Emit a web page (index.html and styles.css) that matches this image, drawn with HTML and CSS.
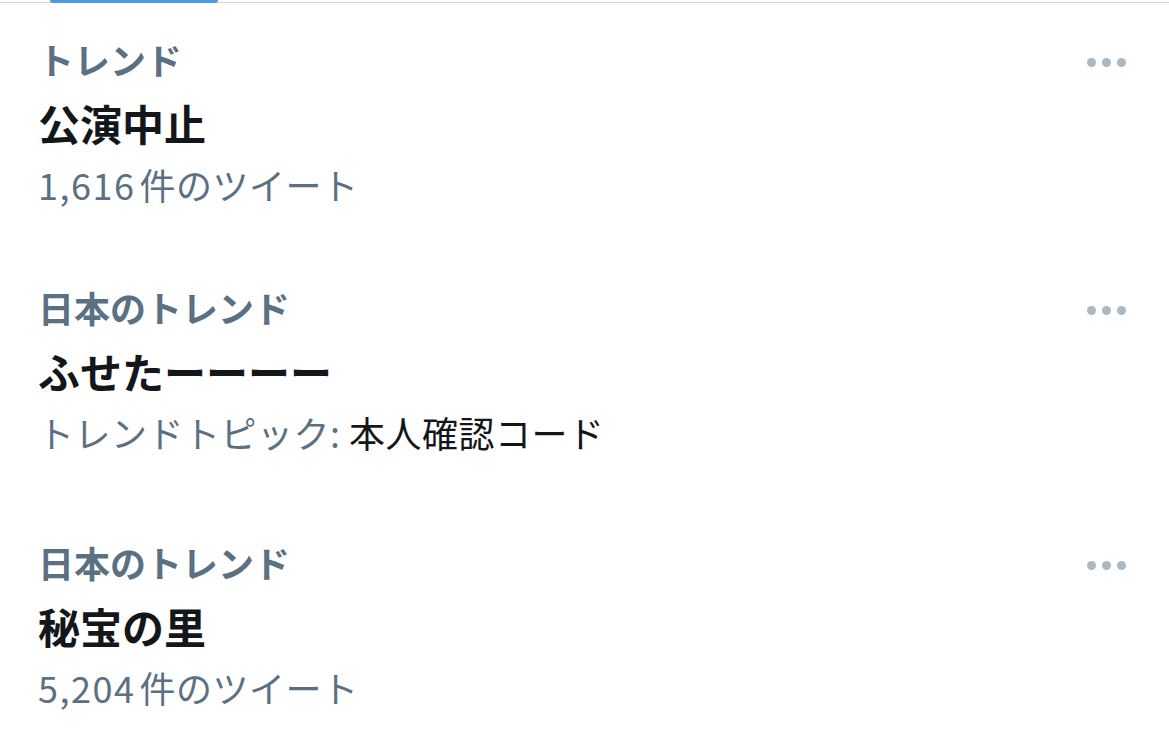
FILE: index.html
```html
<!DOCTYPE html>
<html lang="ja">
<head>
  <meta charset="UTF-8">
  <title>トレンド</title>
  <link rel="stylesheet" href="styles.css">
</head>
<body>

<div class="tabs">
  <div class="tab-indicator"></div>
</div>

<section class="trends">
  <div class="trend">
    <div class="trend-body">
      <p class="trend-label">トレンド</p>
      <p class="trend-title">公演中止</p>
      <p class="trend-meta"><span class="count">1,616</span>件のツイート</p>
    </div>
    <div class="more"><span></span><span></span><span></span></div>
  </div>

  <div class="trend">
    <div class="trend-body">
      <p class="trend-label">日本のトレンド</p>
      <p class="trend-title">ふせたーーーー</p>
      <p class="trend-meta topic-line">トレンドトピック: <span class="topic">本人確認コード</span></p>
    </div>
    <div class="more"><span></span><span></span><span></span></div>
  </div>

  <div class="trend">
    <div class="trend-body">
      <p class="trend-label">日本のトレンド</p>
      <p class="trend-title">秘宝の里</p>
      <p class="trend-meta"><span class="count">5,204</span>件のツイート</p>
    </div>
    <div class="more"><span></span><span></span><span></span></div>
  </div>
</section>

</body>
</html>
```

FILE: styles.css
```css
body {
  font-family: "Noto Sans CJK JP", "Noto Sans", sans-serif;
  background: #fff;
  color: #14171a;
  margin: 0;
  padding: 0;
}

.tabs {
  height: 2px;
  border-bottom: 1px solid #ccd6dd;
}

.tab-indicator {
  width: 168px;
  height: 3px;
  margin-left: 50px;
  background: #4c9be8;
  border-radius: 0 0 3px 3px;
}

.trend {
  display: flex;
  justify-content: space-between;
  align-items: flex-start;
  padding: 26px 43px 40px 38px;
}

.trend p {
  margin: 0;
}

.trend-label {
  font-size: 36px;
  line-height: 60px;
  font-weight: 700;
  color: #5b7083;
}

.trend-title {
  font-size: 42px;
  line-height: 68px;
  font-weight: 700;
}

.trend-meta {
  font-size: 36px;
  line-height: 54px;
  letter-spacing: 0.5px;
  color: #5b7083;
}

.count {
  letter-spacing: 1.5px;
  margin-right: 4px;
}

.topic-line {
  padding-bottom: 7px;
}

.topic {
  color: #14171a;
}

.more {
  display: flex;
  gap: 6px;
  margin-top: 29px;
}

.more span {
  width: 9px;
  height: 9px;
  border-radius: 50%;
  background: #aab8c4;
}
```
